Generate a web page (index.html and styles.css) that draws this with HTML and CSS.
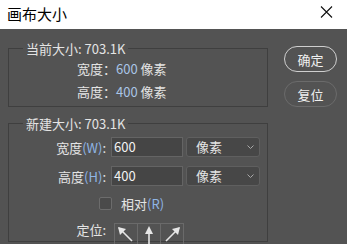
FILE: index.html
```html
<!DOCTYPE html>
<html lang="zh-CN">
<head>
    <meta charset="UTF-8">
    <meta name="viewport" content="width=device-width, initial-scale=1.0">
    <title>画布大小</title>
    <link rel="stylesheet" href="styles.css">
</head>
<body>

    <header class="titlebar">
        <span class="title">画布大小</span>
        <svg class="close" width="13" height="12" viewBox="0 0 13 12">
            <path d="M1 0.5 L12 11.5 M12 0.5 L1 11.5" stroke="#111" stroke-width="1.1" fill="none"/>
        </svg>
    </header>

    <main class="dialog">
        <div class="left">
            <fieldset class="group current">
                <legend>当前大小: 703.1K</legend>
                <div class="info-row">宽度：<span class="num">600</span> 像素</div>
                <div class="info-row">高度：<span class="num">400</span> 像素</div>
            </fieldset>

            <fieldset class="group newsize">
                <legend>新建大小: 703.1K</legend>
                <div class="field-row">
                    <label class="label">宽度<span class="key">(W)</span>:</label>
                    <div class="input">600</div>
                    <div class="select">像素
                        <svg class="chev" width="7" height="4" viewBox="0 0 7 4"><path d="M0.5 0.5 L3.5 3.5 L6.5 0.5" stroke="#a8a8a8" fill="none"/></svg>
                    </div>
                </div>
                <div class="field-row second">
                    <label class="label">高度<span class="key">(H)</span>:</label>
                    <div class="input">400</div>
                    <div class="select">像素
                        <svg class="chev" width="7" height="4" viewBox="0 0 7 4"><path d="M0.5 0.5 L3.5 3.5 L6.5 0.5" stroke="#a8a8a8" fill="none"/></svg>
                    </div>
                </div>
                <div class="check-row">
                    <span class="checkbox"></span>
                    <span>相对<span class="key">(R)</span></span>
                </div>
                <div class="anchor-row">
                    <span class="label">定位:</span>
                    <div class="anchor">
                        <div class="cell">
                            <svg width="22" height="22" viewBox="0 0 22 22"><path d="M4 4 L17 17" stroke="#e6e6e6" stroke-width="1.6"/><path d="M3 3 L11 5 L5 11 Z" fill="#e6e6e6"/></svg>
                        </div>
                        <div class="cell">
                            <svg width="22" height="22" viewBox="0 0 22 22"><path d="M11 5 L11 24" stroke="#e6e6e6" stroke-width="1.6"/><path d="M11 2 L15 10 L7 10 Z" fill="#e6e6e6"/></svg>
                        </div>
                        <div class="cell">
                            <svg width="22" height="22" viewBox="0 0 22 22"><path d="M18 4 L5 17" stroke="#e6e6e6" stroke-width="1.6"/><path d="M19 3 L17 11 L11 5 Z" fill="#e6e6e6"/></svg>
                        </div>
                    </div>
                </div>
            </fieldset>
        </div>

        <div class="buttons">
            <button class="btn primary">确定</button>
            <button class="btn">复位</button>
        </div>
    </main>

</body>
</html>
```

FILE: styles.css
```css
html, body {
    margin: 0;
    padding: 0;
}
body {
    width: 347px;
    height: 244px;
    overflow: hidden;
    background-color: #535353;
    font-family: "Noto Sans CJK SC", "Microsoft YaHei", sans-serif;
    font-size: 13px;
    color: #e4e4e4;
}
.titlebar {
    height: 29px;
    background-color: #ffffff;
    display: flex;
    align-items: center;
    justify-content: space-between;
    padding: 0 14px 0 7px;
}
.title {
    font-size: 15px;
    color: #000;
    line-height: 29px;
    margin-top: -3px;
}
.close {
    margin-top: -5px;
}
.dialog {
    display: flex;
    padding: 11px 0 0 8px;
}
.left {
    width: 260px;
}
.group {
    margin: 0;
    padding: 0;
    border: 1px solid #3f3f3f;
    min-inline-size: 0;
}
.group legend {
    margin-left: 14px;
    padding: 0 3px;
    line-height: 17px;
}
.current {
    padding-bottom: 3px;
}
.info-row {
    line-height: 23px;
    height: 23px;
    padding-left: 68px;
}
.num {
    color: #a9c5e6;
}
.newsize {
    margin-top: 8px;
    height: 125px;
}
.field-row {
    display: flex;
    align-items: center;
    margin-top: 5px;
    height: 20px;
}
.field-row.second {
    margin-top: 9px;
}
.label {
    width: 97px;
    text-align: right;
    margin-right: 5px;
}
.key {
    color: #8fb5e5;
}
.input {
    width: 68px;
    height: 18px;
    line-height: 18px;
    background-color: #454545;
    border: 1px solid #646464;
    padding-left: 2px;
    color: #f2f2f2;
    box-sizing: content-box;
}
.select {
    margin-left: 3px;
    height: 18px;
    line-height: 18px;
    background-color: #474747;
    border: 1px solid #5f5f5f;
    border-radius: 3px;
    padding-left: 9px;
    display: flex;
    align-items: center;
    justify-content: space-between;
    padding-right: 5px;
    box-sizing: content-box;
    width: 58px;
}
.chev {
    display: block;
}
.check-row {
    display: flex;
    align-items: center;
    margin-top: 10px;
    padding-left: 90px;
    height: 14px;
}
.checkbox {
    width: 11px;
    height: 11px;
    border: 1px solid #6c6c6c;
    border-radius: 2px;
    background-color: #4a4a4a;
    margin-right: 9px;
}
.anchor-row {
    display: flex;
    margin-top: 13px;
}
.anchor-row .label {
    line-height: 14px;
    margin-right: 8px;
}
.anchor {
    display: flex;
    border: 1px solid #6a6a6a;
    border-bottom: none;
}
.cell {
    width: 22px;
    height: 24px;
    border-left: 1px solid #6a6a6a;
}
.cell:first-child {
    border-left: none;
}
.cell svg {
    display: block;
}
.buttons {
    display: flex;
    flex-direction: column;
    margin-left: 16px;
    margin-top: 6px;
}
.btn {
    width: 53px;
    height: 26px;
    border-radius: 13px;
    background: transparent;
    border: 1.5px solid #6b6b6b;
    color: #f0f0f0;
    font-family: inherit;
    font-size: 13px;
    padding: 0;
    margin-bottom: 9px;
}
.btn.primary {
    border-color: #cfcfcf;
}
```
